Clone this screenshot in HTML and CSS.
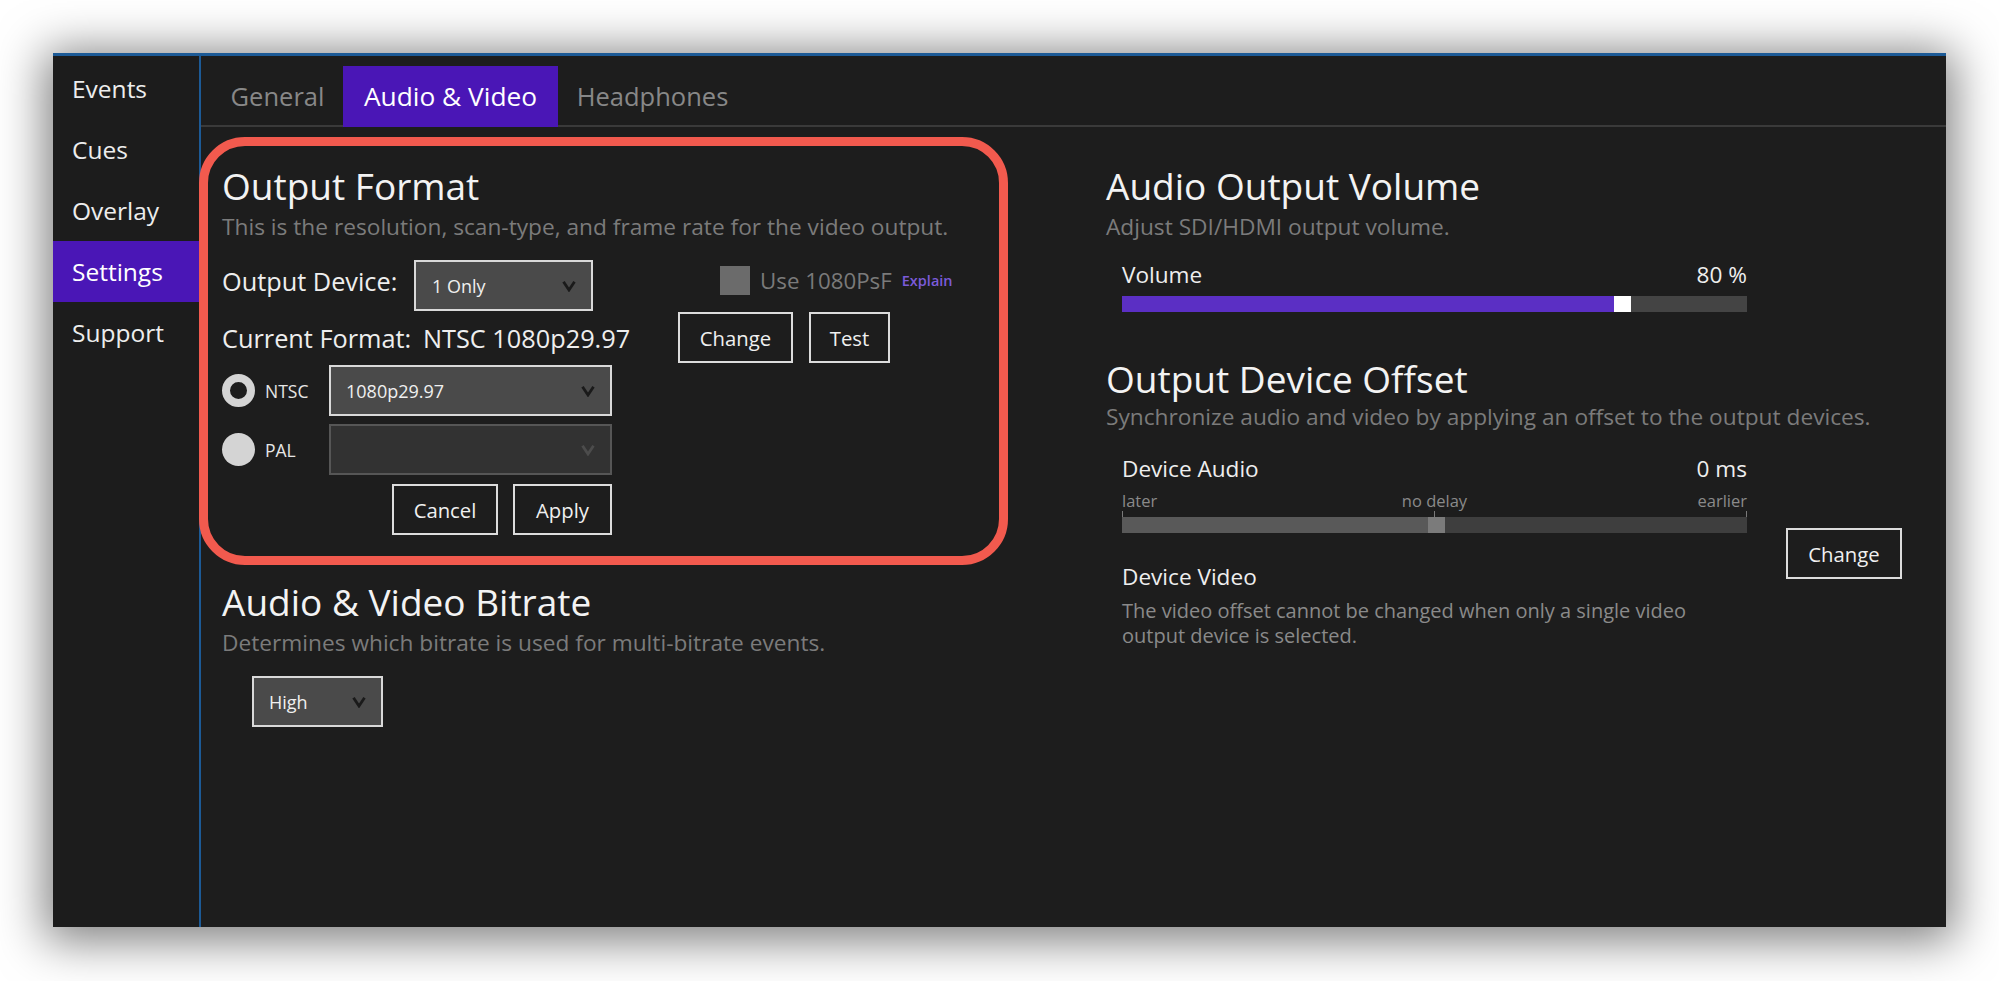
FILE: index.html
```html
<!DOCTYPE html>
<html lang="en">
<head>
<meta charset="utf-8">
<title>Settings - Audio &amp; Video</title>
<link rel="stylesheet" href="styles.css">
</head>
<body>
<div class="window">
  <nav class="sidebar">
    <div class="nav-item">Events</div>
    <div class="nav-item">Cues</div>
    <div class="nav-item">Overlay</div>
    <div class="nav-item active">Settings</div>
    <div class="nav-item">Support</div>
  </nav>
  <main class="main">
    <div class="tabs">
      <div class="tab tab-general">General</div>
      <div class="tab tab-av active">Audio &amp; Video</div>
      <div class="tab tab-hp">Headphones</div>
    </div>
    <div class="content">
      <div class="col col-left">
        <section class="sec">
          <h2 class="title">Output Format</h2>
          <p class="sub">This is the resolution, scan-type, and frame rate for the video output.</p>
          <div class="row row-device">
            <span class="label label-device">Output Device:</span>
            <div class="select select-device"><span>1 Only</span><svg class="chev" viewBox="0 0 14 12"><polyline points="1.5,1.8 7,10 12.5,1.8"/></svg></div>
            <div class="psf">
              <span class="checkbox"></span>
              <span class="psf-text">Use 1080PsF</span>
              <span class="explain">Explain</span>
            </div>
          </div>
          <div class="row row-current">
            <div class="current">
              <span class="label label-current">Current Format:</span>
              <span class="label">NTSC 1080p29.97</span>
            </div>
            <button class="btn btn-change">Change</button>
            <button class="btn btn-test">Test</button>
          </div>
          <div class="row row-ntsc">
            <div class="radio-wrap"><span class="radio radio-on"></span><span class="radio-label">NTSC</span></div>
            <div class="select select-std"><span>1080p29.97</span><svg class="chev" viewBox="0 0 14 12"><polyline points="1.5,1.8 7,10 12.5,1.8"/></svg></div>
          </div>
          <div class="row row-pal">
            <div class="radio-wrap"><span class="radio radio-off"></span><span class="radio-label">PAL</span></div>
            <div class="select select-std disabled"><span></span><svg class="chev" viewBox="0 0 14 12"><polyline points="1.5,1.8 7,10 12.5,1.8"/></svg></div>
          </div>
          <div class="row row-actions">
            <button class="btn btn-cancel">Cancel</button>
            <button class="btn btn-apply">Apply</button>
          </div>
        </section>
        <section class="sec sec-bitrate">
          <h2 class="title">Audio &amp; Video Bitrate</h2>
          <p class="sub">Determines which bitrate is used for multi-bitrate events.</p>
          <div class="select select-high"><span>High</span><svg class="chev" viewBox="0 0 14 12"><polyline points="1.5,1.8 7,10 12.5,1.8"/></svg></div>
        </section>
      </div>
      <div class="col col-right">
        <section class="sec">
          <h2 class="title">Audio Output Volume</h2>
          <p class="sub">Adjust SDI/HDMI output volume.</p>
          <div class="volume">
            <div class="value-row"><span>Volume</span><span>80 %</span></div>
            <div class="vol-bar">
              <div class="vol-fill" style="width: 78.7%"></div>
              <div class="vol-thumb"></div>
              <div class="vol-rest"></div>
            </div>
          </div>
        </section>
        <section class="sec sec-offset">
          <h2 class="title">Output Device Offset</h2>
          <p class="sub">Synchronize audio and video by applying an offset to the output devices.</p>
          <div class="offset-row">
            <div class="offset-block">
              <div class="value-row"><span>Device Audio</span><span>0 ms</span></div>
              <div class="scale-labels"><span class="sl-left">later</span><span class="sl-mid">no delay</span><span class="sl-right">earlier</span></div>
              <div class="ticks"><span></span><span></span><span></span></div>
              <div class="off-bar">
                <div class="off-fill" style="width: 48.9%"></div>
                <div class="off-thumb"></div>
                <div class="off-rest"></div>
              </div>
              <div class="device-video">Device Video</div>
              <p class="desc">The video offset cannot be changed when only a single video output device is selected.</p>
            </div>
            <button class="btn btn-offset-change">Change</button>
          </div>
        </section>
      </div>
    </div>
  </main>
  <div class="highlight"></div>
</div>
</body>
</html>
```
FILE: styles.css
```css
html, body {
  margin: 0;
  padding: 0;
  background: #ffffff;
  overflow: hidden;
}
body {
  width: 1999px;
  height: 981px;
  font-family: "Open Sans", "Noto Sans", "Liberation Sans", sans-serif;
  color: #ececec;
}
.window {
  position: relative;
  box-sizing: border-box;
  margin: 53px 0 0 53px;
  width: 1893px;
  height: 874px;
  background: #1d1d1d;
  border-top: 3px solid #1c5a96;
  display: flex;
  box-shadow: 0 6px 44px 8px rgba(0, 0, 0, 0.5);
}
.sidebar {
  box-sizing: border-box;
  width: 148px;
  flex: none;
  padding-top: 2px;
  background: #1c1c1c;
  border-right: 2px solid #1c5a96;
}
.nav-item {
  height: 61px;
  line-height: 61px;
  padding-left: 19px;
  font-size: 24.5px;
  color: #ededed;
}
.nav-item.active {
  background: #4a16b6;
  color: #ffffff;
}
.main {
  flex: 1;
  display: flex;
  flex-direction: column;
  min-width: 0;
}
.tabs {
  display: flex;
  padding: 10px 0 0 11px;
  height: 71px;
  box-sizing: border-box;
  border-bottom: 2px solid #3a3a3a;
}
.tab {
  height: 61px;
  line-height: 61px;
  text-align: center;
  font-size: 25.5px;
  color: #888888;
  flex: none;
}
.tab-general { width: 131px; }
.tab-av { width: 215px; font-size: 26.3px; }
.tab-hp { width: 189px; }
.tab.active {
  background: #4a16b6;
  color: #ffffff;
}
.content {
  display: grid;
  grid-template-columns: 905px 1fr;
  flex: 1;
}
.col {
  padding-top: 36px;
}
.col-left {
  padding-left: 21px;
}
.sec { margin: 0; }
.title {
  margin: 0;
  font-weight: 400;
  font-size: 37px;
  line-height: 45px;
  color: #f3f3f3;
  white-space: nowrap;
}
.sub {
  margin: 4px 0 0 0;
  font-size: 22.7px;
  line-height: 30px;
  color: #7b7b7b;
  white-space: nowrap;
}
.row {
  display: flex;
  align-items: center;
  height: 51px;
}
.row-device { margin-top: 18px; }
.row-current { margin-top: 1px; }
.row-ntsc { margin-top: 2px; }
.row-pal { margin-top: 8px; }
.row-actions {
  margin-top: 9px;
  width: 390px;
  justify-content: flex-end;
  gap: 15px;
}
.label {
  font-size: 25.3px;
  line-height: 30px;
  color: #eeeeee;
  white-space: nowrap;
}
.label-device {
  width: 192px;
  flex: none;
  margin-bottom: 9px;
}
.select {
  box-sizing: border-box;
  height: 51px;
  display: flex;
  align-items: center;
  justify-content: space-between;
  padding: 0 15px 0 16px;
  background: #4a4a4a;
  border: 2px solid #d9d9d9;
  font-size: 18px;
  color: #f0f0f0;
  flex: none;
}
.chev {
  width: 14px;
  height: 12px;
  fill: none;
  stroke: #1a1a1a;
  stroke-width: 2.8;
}
.select-device { width: 179px; }
.select-std { width: 283px; padding-left: 15px; }
.select.disabled {
  background: #323232;
  border-color: #565656;
}
.select.disabled .chev { stroke: #4c4c4c; }
.psf {
  display: flex;
  align-items: center;
  margin-left: 127px;
  margin-bottom: 11px;
}
.checkbox {
  width: 30px;
  height: 29px;
  background: #6b6b6b;
  flex: none;
}
.psf-text {
  margin-left: 10px;
  font-size: 22.3px;
  color: #7a7a7a;
  white-space: nowrap;
}
.explain {
  margin-left: 10px;
  font-size: 14.5px;
  font-weight: 600;
  color: #7b5bd9;
}
.current {
  width: 456px;
  flex: none;
  display: flex;
}
.label-current { width: 201px; flex: none; }
.btn {
  box-sizing: border-box;
  height: 51px;
  background: transparent;
  border: 2px solid #dcdcdc;
  color: #f0f0f0;
  font-family: "Open Sans", "Noto Sans", "Liberation Sans", sans-serif;
  font-size: 20.3px;
  padding: 0;
  margin: 0;
  flex: none;
}
.btn-change { width: 115px; }
.btn-test { width: 81px; margin-left: 16px; }
.btn-cancel { width: 106px; }
.btn-apply { width: 99px; }
.radio-wrap {
  width: 107px;
  flex: none;
  display: flex;
  align-items: center;
}
.radio {
  box-sizing: border-box;
  width: 33px;
  height: 33px;
  border-radius: 50%;
  flex: none;
}
.radio-on {
  border: 8px solid #d4d4d4;
  background: #1d1d1d;
}
.radio-off {
  background: #d4d4d4;
}
.radio-label {
  margin-left: 10px;
  font-size: 17.5px;
  color: #e6e6e6;
}
.sec-bitrate { margin-top: 44px; }
.select-high {
  margin: 18px 0 0 30px;
  width: 131px;
  padding-left: 15px;
}
.volume {
  margin-top: 18px;
  padding-left: 16px;
  width: 625px;
}
.value-row {
  display: flex;
  justify-content: space-between;
  font-size: 22.6px;
  line-height: 30px;
  color: #eeeeee;
}
.vol-bar {
  margin-top: 6px;
  height: 16px;
  display: flex;
}
.vol-fill { background: #5b2fc4; flex: none; }
.vol-thumb { width: 17px; background: #ffffff; flex: none; }
.vol-rest { flex: 1; background: #444444; }
.sec-offset { margin-top: 44px; }
.sec-offset .sub { margin-top: 1px; }
.offset-row {
  display: flex;
  margin-top: 22px;
}
.offset-block {
  padding-left: 16px;
  width: 625px;
  flex: none;
}
.scale-labels {
  margin-top: 7px;
  display: grid;
  grid-template-columns: 1fr auto 1fr;
  font-size: 16.5px;
  line-height: 20px;
  color: #8a8a8a;
}
.sl-right { text-align: right; }
.ticks {
  margin-top: 0;
  height: 6px;
  display: flex;
  justify-content: space-between;
}
.ticks span {
  width: 1px;
  height: 6px;
  background: #7a7a7a;
}
.off-bar {
  height: 16px;
  display: flex;
}
.off-fill { background: #595959; flex: none; }
.off-thumb { width: 17px; background: #7b7b7b; flex: none; }
.off-rest { flex: 1; background: #3e3e3e; }
.device-video {
  margin-top: 29px;
  font-size: 22.6px;
  line-height: 30px;
  color: #eeeeee;
}
.desc {
  margin: 6px 0 0 0;
  width: 600px;
  font-size: 20px;
  line-height: 25px;
  color: #8a8a8a;
}
.btn-offset-change {
  width: 116px;
  margin-top: 74px;
  margin-left: 39px;
}
.highlight {
  position: absolute;
  left: 146px;
  top: 81px;
  width: 809px;
  height: 428px;
  box-sizing: border-box;
  border: 9px solid #f25a4e;
  border-radius: 46px;
  pointer-events: none;
}
```
